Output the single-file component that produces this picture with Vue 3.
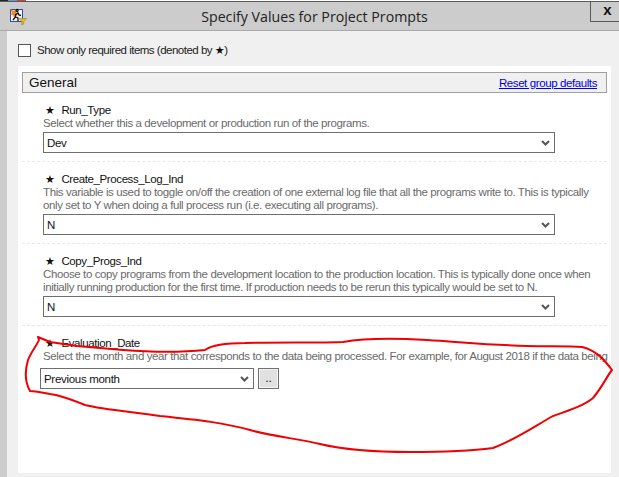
<template>
  <div class="window">
    <div class="top-strip">
      <i class="s1"></i><i class="s2"></i><i class="s3"></i>
    </div>
    <div class="titlebar">
      <svg class="app-icon" width="18" height="17" viewBox="0 0 18 17">
        <rect x="1.5" y="1.5" width="12" height="12" fill="#f4f4fa" stroke="#2a4fa8" />
        <path d="M1 1l4 2 2-2 0 4 3 1-3 2-2 2-1-3-3 0 2-2z" fill="#f08a24" />
        <path d="M8 3.500a1 1 0 1 1 0.100 0zM4 12l2.500-3 0-2.500 2.500-1.500 1 2 2 0.500M6.500 9l2.500 1 0 3" fill="none" stroke="#111" stroke-width="1.300" />
        <path d="M10 10.500h7.500l-2.800 3.200 0 2.300-2 1 0-3.300z" fill="#e8b820" stroke="#9a7a10" stroke-width="0.500" />
      </svg>
      <span class="title">Specify Values for Project Prompts</span>
      <div class="close">x</div>
    </div>
    <div class="main">
      <div class="side"></div>
      <div class="content">
        <label class="only-required">
          <span class="box"></span>
          <span>Show only required items (denoted by <b class="star">★</b>)</span>
        </label>
        <div class="panel">
          <div class="group-head">
            <span class="group-name">General</span>
            <a class="reset">Reset group defaults</a>
          </div>
          <div v-for="p in prompts" :key="p.name" class="prompt" :class="{ last: p.browse }">
            <div class="name"><b class="star">★</b><span>{{ p.name }}</span></div>
            <div class="desc">
              <div v-for="line in p.desc" :key="line">{{ line }}</div>
            </div>
            <div class="control">
              <div class="select" :class="{ short: p.browse }">
                <span>{{ p.value }}</span>
                <svg width="9" height="6" viewBox="0 0 9 6">
                  <path d="M1 1l3.500 3.500L8 1" fill="none" stroke="#555" stroke-width="2" />
                </svg>
              </div>
              <div v-if="p.browse" class="browse">..</div>
            </div>
          </div>
        </div>
      </div>
    </div>
    <svg class="scribble" width="619" height="477" viewBox="0 0 619 477">
      <path
        d="M38 337 L50 342 L77 346 L100 348 L123 350 C150 352 185 352 205 350 C212 345 225 343 245 343 C275 342 320 343 343 342 C365 338 395 338 427 340 C460 342 490 345 527 346 C550 346.500 570 346 582 347 C595 350 603 358 612 370 C607 376 603 386 593 398 C585 405 570 410 553 416 C535 426 515 440 493 448 C470 451 440 452 410 452 C380 452 345 450 320 444 C300 439 270 436 250 430 C225 423 200 420 160 416 C135 412 105 410 85 405 C70 399 60 395 50 394 C40 392 35 391 30 391 C25 382 25 370 28 360 C31 352 37 345 39 340 Z"
        fill="none"
        stroke="#f00000"
        stroke-width="2"
        stroke-linejoin="round"
      />
    </svg>
  </div>
</template>

<script setup>
const prompts = [
  {
    name: 'Run_Type',
    desc: ['Select whether this a development or production run of the programs.'],
    value: 'Dev'
  },
  {
    name: 'Create_Process_Log_Ind',
    desc: [
      'This variable is used to toggle on/off the creation of one external log file that all the programs write to. This is typically',
      'only set to Y when doing a full process run (i.e. executing all programs).'
    ],
    value: 'N'
  },
  {
    name: 'Copy_Progs_Ind',
    desc: [
      'Choose to copy programs from the development location to the production location. This is typically done once when',
      'initially running production for the first time. If production needs to be rerun this typically would be set to N.'
    ],
    value: 'N'
  },
  {
    name: 'Evaluation_Date',
    desc: ['Select the month and year that corresponds to the data being processed. For example, for August 2018 if the data being'],
    value: 'Previous month',
    browse: true
  }
];
</script>

<style>
html,
body {
  margin: 0;
  overflow: hidden;
}
</style>

<style scoped>
.window {
  position: relative;
  width: 619px;
  height: 477px;
  overflow: hidden;
  background: #f0f0f0;
  font-family: "Liberation Sans", sans-serif;
  font-size: 12px;
  color: #111;
  display: flex;
  flex-direction: column;
}

.top-strip {
  height: 1px;
  display: flex;
  background: #fff;
}

.top-strip i {
  display: block;
  height: 1px;
}

.s1 {
  width: 8px;
  background: #222;
}

.s2 {
  width: 9px;
  background: #6c8fd6;
}

.s3 {
  width: 9px;
  background: #d04040;
}

.titlebar {
  height: 30px;
  box-sizing: border-box;
  background: #cccccc;
  border-top: 1px solid #5a5a5a;
  border-bottom: 1px solid #a9a9a9;
  display: flex;
  align-items: center;
  position: relative;
}

.app-icon {
  position: absolute;
  left: 9px;
  top: 6px;
}

.title {
  width: 100%;
  padding-left: 10px;
  text-align: center;
  font-family: "Open Sans", sans-serif;
  font-size: 14.200px;
  color: #222;
}

.close {
  position: absolute;
  right: -1px;
  top: -1px;
  width: 30px;
  height: 21px;
  box-sizing: border-box;
  border: 1px solid #5a5a5a;
  padding-left: 5px;
  text-align: center;
  font: bold 15px/16px "Liberation Sans", sans-serif;
  color: #111;
}

.main {
  flex: 1;
  display: flex;
  min-width: 0;
}

.side {
  width: 7px;
  flex-shrink: 0;
  background: #cccccc;
}

.content {
  flex: 1;
  min-width: 0;
  padding: 0 8px 4px 11px;
  display: flex;
  flex-direction: column;
}

.only-required {
  height: 35px;
  box-sizing: border-box;
  padding-top: 3px;
  display: flex;
  align-items: center;
  gap: 6px;
  font-size: 11.500px;
  letter-spacing: -0.5px;
  color: #222;
}

.box {
  width: 13px;
  height: 13px;
  box-sizing: border-box;
  border: 1px solid #555;
  background: #fff;
}

.star {
  font: 11px "DejaVu Sans", sans-serif;
  color: #111;
}

.panel {
  flex: 1;
  background: #fff;
  padding: 6px 4px 0;
  min-height: 0;
}

.group-head {
  height: 21px;
  box-sizing: border-box;
  border: 1px solid #a0a0a0;
  background: #f0f0f0;
  display: flex;
  justify-content: space-between;
  align-items: center;
  padding: 0 9px 0 6px;
}

.group-name {
  font-size: 13.500px;
}

.reset {
  color: #0000e0;
  text-decoration: underline;
  font-size: 11.500px;
  letter-spacing: -0.4px;
}

.prompt {
  padding: 11px 6px 8px 21px;
  border-bottom: 1px dashed #e8e8e8;
}

.prompt.last {
  border-bottom: none;
  padding-left: 18px;
  padding-right: 0;
}

.name {
  display: flex;
  align-items: center;
  gap: 7px;
  height: 12px;
  margin-bottom: 1px;
  font-size: 11.500px;
  letter-spacing: -0.4px;
  padding-left: 2px;
}

.prompt.last .name {
  padding-left: 5px;
}

.desc {
  color: #6a6a6a;
  font-size: 11.500px;
  letter-spacing: -0.39px;
  line-height: 13px;
  white-space: nowrap;
}

.prompt.last .desc {
  padding-left: 3px;
}

.control {
  display: flex;
  gap: 4px;
  margin-top: 2px;
}

.prompt.last .control {
  margin-top: 5px;
}

.select {
  width: 512px;
  height: 21px;
  box-sizing: border-box;
  border: 1px solid #6e6e6e;
  background: #fff;
  display: flex;
  align-items: center;
  justify-content: space-between;
  padding: 0 4px 0 3px;
  font-size: 11.500px;
  letter-spacing: -0.3px;
  color: #111;
}

.select.short {
  width: 214px;
}

.browse {
  width: 21px;
  height: 21px;
  box-sizing: border-box;
  border: 1px solid #707070;
  box-shadow: inset 0 0 0 1px #f4f4f4;
  background: #e1e1e1;
  text-align: center;
  line-height: 19px;
}

.scribble {
  position: absolute;
  left: 0;
  top: 0;
  pointer-events: none;
}
</style>
